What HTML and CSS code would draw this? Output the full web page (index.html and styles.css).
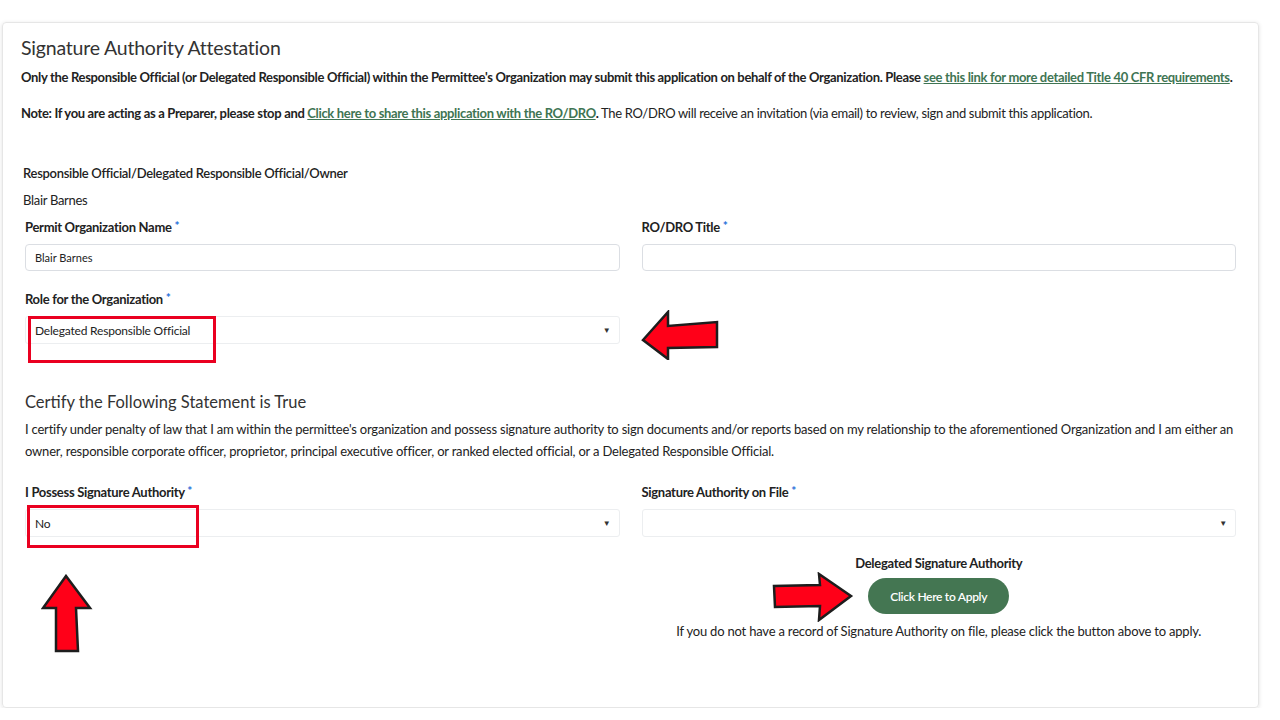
FILE: index.html
```html
<!DOCTYPE html>
<html lang="en">
<head>
  <meta charset="UTF-8" />
  <title>Signature Authority Attestation</title>
  <link rel="stylesheet" href="styles.css">
</head>
<body>
  <div class="card">
    <h2 class="title">Signature Authority Attestation</h2>
    <p class="lead">Only the Responsible Official (or Delegated Responsible Official) within the Permittee's Organization may submit this application on behalf of the Organization. Please <a href="#">see this link for more detailed Title 40 CFR requirements</a>.</p>
    <p class="note"><b>Note: If you are acting as a Preparer, please stop and <a href="#">Click here to share this application with the RO/DRO</a>.</b> The RO/DRO will receive an invitation (via email) to review, sign and submit this application.</p>

    <div class="ro">
      <div class="ro-label">Responsible Official/Delegated Responsible Official/Owner</div>
      <div class="ro-name">Blair Barnes</div>
    </div>

    <div class="row">
      <div class="field">
        <label>Permit Organization Name <span class="req">*</span></label>
        <input type="text" class="input" value="Blair Barnes" />
      </div>
      <div class="field">
        <label>RO/DRO Title <span class="req">*</span></label>
        <input type="text" class="input" />
      </div>
    </div>

    <div class="row">
      <div class="field">
        <label>Role for the Organization <span class="req">*</span></label>
        <div class="select-wrap">
          <div class="select">Delegated Responsible Official<span class="caret">&#9660;</span></div>
          <div class="mark mark-role"></div>
          <svg class="arrow arrow-left" viewBox="0 0 80 50" width="80" height="50">
            <polygon points="3,30 28,2 28,16 77,12 77,37 28,38 28,49" fill="#ff0018" stroke="#1d1d1d" stroke-width="2.5" />
          </svg>
        </div>
      </div>
      <div class="field"></div>
    </div>

    <h3 class="subtitle">Certify the Following Statement is True</h3>
    <p class="statement">I certify under penalty of law that I am within the permittee's organization and possess signature authority to sign documents and/or reports based on my relationship to the aforementioned Organization and I am either an owner, responsible corporate officer, proprietor, principal executive officer, or ranked elected official, or a Delegated Responsible Official.</p>

    <div class="row">
      <div class="field">
        <label>I Possess Signature Authority <span class="req">*</span></label>
        <div class="select-wrap">
          <div class="select">No<span class="caret">&#9660;</span></div>
          <div class="mark mark-no"></div>
          <svg class="arrow arrow-up" viewBox="0 0 52 80" width="52" height="80">
            <polygon points="25,2 2,34 15,34 15,77 37,77 35,34 49,34" fill="#ff0018" stroke="#1d1d1d" stroke-width="2.5" />
          </svg>
        </div>
      </div>
      <div class="field">
        <label>Signature Authority on File <span class="req">*</span></label>
        <div class="select"><span class="caret">&#9660;</span></div>
        <div class="apply">
          <div class="apply-title">Delegated Signature Authority</div>
          <button class="btn-apply">Click Here to Apply</button>
          <div class="apply-help">If you do not have a record of Signature Authority on file, please click the button above to apply.</div>
          <svg class="arrow arrow-right" viewBox="0 0 82 50" width="82" height="50">
            <polygon points="79,24 47,2 48,13 2,14 3,35 48,34 47,48" fill="#ff0018" stroke="#1d1d1d" stroke-width="2.5" />
          </svg>
        </div>
      </div>
    </div>
  </div>
</body>
</html>
```

FILE: styles.css
```css
body {
  margin: 0;
  background: #fff;
  font-family: "Source Sans Pro", Lato, "Liberation Sans", sans-serif;
  color: #222;
}
.card {
  margin: 22px 0 0 2px;
  width: 1257px;
  height: 686px;
  box-sizing: border-box;
  padding: 13px 18px 0 18px;
  border: 1px solid #e6e6e6;
  border-radius: 4px;
  box-shadow: 0 1px 4px rgba(0,0,0,0.12);
}
.title {
  margin: 0;
  font-size: 19.5px;
  font-weight: 400;
  color: #333;
  line-height: 24px;
  letter-spacing: -0.2px;
}
.lead, .note {
  margin: 7px 0 0;
  font-size: 13px;
  line-height: 20px;
  letter-spacing: -0.33px;
  white-space: nowrap;
}
.lead { font-weight: 700; }
.note { margin-top: 16px; }
a { color: #3f7553; text-decoration: underline; }
.ro { margin: 40px 0 0 2px; font-size: 13px; letter-spacing: -0.3px; }
.ro-label { font-weight: 600; line-height: 20px; }
.ro-name { margin-top: 7px; line-height: 20px; }
.row {
  display: flex;
  gap: 22px;
  padding: 0 4px;
}
.field {
  flex: 1;
  position: relative;
}
.row + .row { margin-top: 11px; }
label {
  display: block;
  font-size: 13px;
  font-weight: 700;
  letter-spacing: -0.3px;
  line-height: 20px;
  margin: 6px 0 7px;
}
.req { color: #1e6fd9; font-size: 12px; vertical-align: 2px; }
.input {
  display: block;
  width: 100%;
  box-sizing: border-box;
  height: 27px;
  border: 1px solid #dbdee3;
  border-radius: 4px;
  padding: 0 9px;
  font-family: inherit;
  font-size: 11px;
  color: #222;
}
.select-wrap { position: relative; }
.select {
  position: relative;
  height: 28px;
  box-sizing: border-box;
  border: 1px solid #eceef0;
  border-radius: 3px;
  padding: 0 9px;
  font-size: 12px;
  line-height: 27px;
  letter-spacing: -0.2px;
}
.caret {
  position: absolute;
  right: 8px;
  top: 0;
  font-size: 8px;
  color: #333;
}
.mark {
  position: absolute;
  border: 3px solid #ea0020;
  box-sizing: border-box;
}
.mark-role { left: 3px; top: 0; width: 188px; height: 47px; }
.mark-no { left: 2px; top: -4px; width: 172px; height: 43px; }
.arrow { position: absolute; }
.arrow-left { left: 615px; top: -6px; }
.arrow-up { left: 16px; top: 65px; }
.subtitle {
  margin: 47px 0 0 4px;
  font-size: 16.5px;
  font-weight: 400;
  color: #333;
  line-height: 22px;
}
.statement {
  margin: 5px 0 13px 4px;
  font-size: 13px;
  line-height: 22px;
  letter-spacing: -0.2px;
}
.apply {
  position: relative;
  text-align: center;
  margin-top: 18px;
  font-size: 13px;
}
.apply-title { font-weight: 700; line-height: 16px; letter-spacing: -0.3px; }
.btn-apply {
  margin-top: 7px;
  width: 141px;
  height: 36px;
  border: none;
  border-radius: 18px;
  background: #447652;
  color: #fff;
  font-family: inherit;
  font-size: 12px;
  font-weight: 600;
  letter-spacing: -0.3px;
}
.apply-help { margin-top: 8px; line-height: 18px; letter-spacing: -0.2px; }
.arrow-right { left: 130px; top: 17px; }
```
